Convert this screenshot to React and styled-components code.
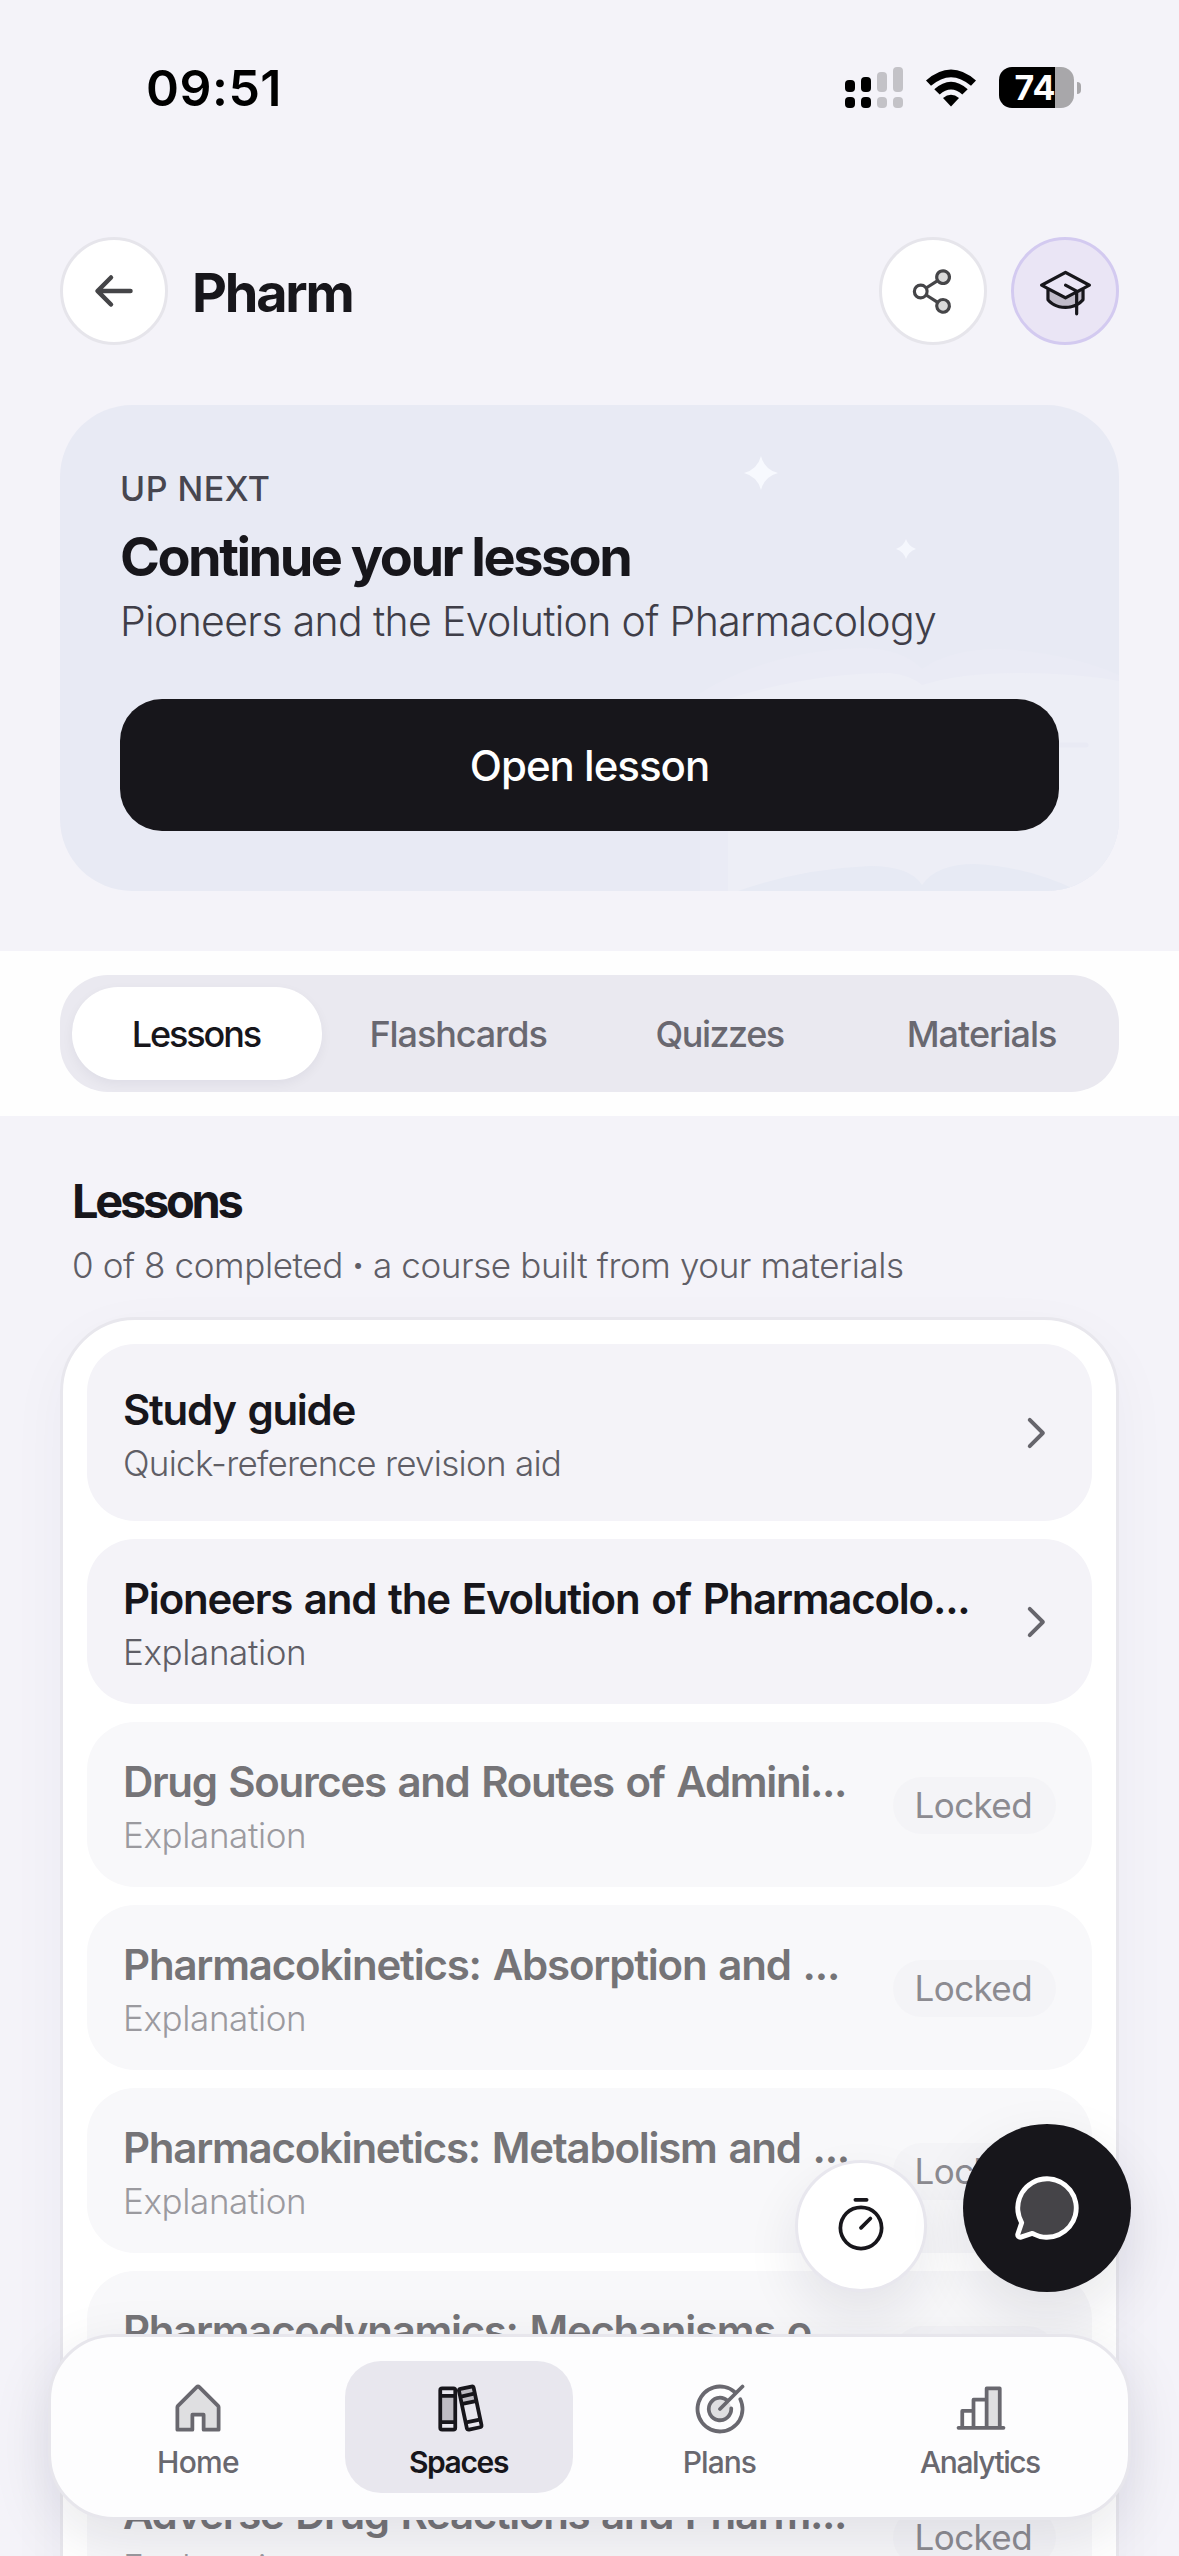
import { useState } from 'react';
import styled, { createGlobalStyle } from 'styled-components';
import {
  PiArrowLeftBold,
  PiBooksDuotone,
  PiCaretRightBold,
  PiChartBarDuotone,
  PiChatCircleDuotone,
  PiGraduationCapDuotone,
  PiHouseDuotone,
  PiShareNetworkDuotone,
  PiTargetDuotone,
  PiTimer,
} from 'react-icons/pi';

const tabs = [
  { label: 'Lessons', tracking: -2.1 },
  { label: 'Flashcards', tracking: -1.1 },
  { label: 'Quizzes', tracking: -1.5 },
  { label: 'Materials', tracking: -1 },
];

const lessons = [
  { title: 'Study guide', note: 'Quick-reference revision aid', tracking: -1.3, noteTracking: -0.75, tall: true },
  { title: 'Pioneers and the Evolution of Pharmacolo...', note: 'Explanation', tracking: -1.22 },
  { title: 'Drug Sources and Routes of Admini...', note: 'Explanation', tracking: -1.34, locked: true },
  { title: 'Pharmacokinetics: Absorption and ...', note: 'Explanation', tracking: -1.2, locked: true },
  { title: 'Pharmacokinetics: Metabolism and ...', note: 'Explanation', tracking: -1.25, locked: true },
  { title: 'Pharmacodynamics: Mechanisms o...', note: 'Explanation', tracking: -1.3, locked: true },
  { title: 'Adverse Drug Reactions and Pharm...', note: 'Explanation', tracking: -1.34, locked: true },
];

const navItems = [
  { label: 'Home', icon: PiHouseDuotone, tracking: -0.7 },
  { label: 'Spaces', icon: PiBooksDuotone, tracking: -1.39 },
  { label: 'Plans', icon: PiTargetDuotone, tracking: -0.97 },
  { label: 'Analytics', icon: PiChartBarDuotone, tracking: -1.5 },
];

function SignalIcon() {
  return (
    <svg width="58" height="41" viewBox="0 0 58 41">
      <g fill="#000">
        <rect x="0" y="13" width="10" height="12" rx="4" />
        <rect x="16" y="10" width="10" height="15" rx="4" />
        <rect x="0" y="30" width="10" height="11" rx="4" />
        <rect x="16" y="30" width="10" height="11" rx="4" />
      </g>
      <g fill="#c3c2c7">
        <rect x="32" y="5" width="10" height="20" rx="4" />
        <rect x="48" y="0" width="10" height="25" rx="4" />
        <rect x="32" y="30" width="10" height="11" rx="4" />
        <rect x="48" y="30" width="10" height="11" rx="4" />
      </g>
    </svg>
  );
}

function WifiIcon() {
  return (
    <svg width="52" height="38" viewBox="0 0 52 38">
      <path d="M1 11.5 Q26 -10.5 51 11.5 L46 16.8 Q26 -0.5 6 16.8 Z" fill="#000" />
      <path d="M9.3 20.2 Q26 5.2 42.7 20.2 L37.3 25.6 Q26 15.4 14.7 25.6 Z" fill="#000" />
      <path d="M18 29 Q26 22.6 34 29 L26 37.4 Z" fill="#000" />
    </svg>
  );
}

// Open book and sparkles behind the card content
function BookArt() {
  return (
    <Art viewBox="0 0 1059 486">
      <path d="M701 51 Q704.500 64.500 718 68 Q704.500 71.500 701 85 Q697.500 71.500 684 68 Q697.500 64.500 701 51 Z" fill="#f7f9fe" />
      <path d="M846 134 Q848.500 141.500 856 144 Q848.500 146.500 846 154 Q843.500 146.500 836 144 Q843.500 141.500 846 134 Z" fill="#f5f7fd" />
      <path d="M640 486 V288 Q710 246 800 243 Q842 243 862 264 Q890 244 940 244 Q1010 248 1059 270 V486 Z" fill="#eaebf5" />
      <path d="M668 486 V294 Q750 268 830 268 Q850 270 862 280 Q900 268 960 268 Q1015 268 1059 276 V486 Z" fill="#edeef6" />
      <path d="M678 486 Q740 464 810 461 Q850 461 862 480 Q876 459 915 459 Q970 462 1018 486 Z" fill="#e7eaf4" />
      <path d="M1000 340 H1026" stroke="#e9eaf4" strokeWidth="5" strokeLinecap="round" />
    </Art>
  );
}

export default function App() {
  const [activeTab, setActiveTab] = useState('Lessons');
  const [activeNav, setActiveNav] = useState('Spaces');

  return (
    <Screen>
      <GlobalStyle />
      <StatusBar>
        <Clock>09:51</Clock>
        <StatusIcons>
          <SignalIcon />
          <WifiIcon />
          <Battery>
            <BatteryBody>74</BatteryBody>
            <BatteryTip />
          </Battery>
        </StatusIcons>
      </StatusBar>

      <Header>
        <RoundButton aria-label="Back">
          <PiArrowLeftBold size={48} />
        </RoundButton>
        <PageTitle>Pharm</PageTitle>
        <RoundButton aria-label="Share">
          <PiShareNetworkDuotone size={51} />
        </RoundButton>
        <RoundButton aria-label="Study" $accent>
          <PiGraduationCapDuotone size={51} />
        </RoundButton>
      </Header>

      <NextCard>
        <BookArt />
        <NextContent>
          <Eyebrow>UP NEXT</Eyebrow>
          <NextTitle>Continue your lesson</NextTitle>
          <NextText>Pioneers and the Evolution of Pharmacology</NextText>
          <OpenButton>Open lesson</OpenButton>
        </NextContent>
      </NextCard>

      <TabStrip>
        <TabList>
          {tabs.map((tab) => (
            <Tab
              key={tab.label}
              $active={tab.label === activeTab}
              $tracking={tab.tracking}
              onClick={() => setActiveTab(tab.label)}
            >
              {tab.label}
            </Tab>
          ))}
        </TabList>
      </TabStrip>

      <SectionHead>
        <SectionTitle>Lessons</SectionTitle>
        <SectionText>0 of 8 completed <Dot>·</Dot> a course built from your materials</SectionText>
      </SectionHead>

      <LessonList>
        {lessons.map((lesson) => (
          <LessonRow key={lesson.title} $tall={lesson.tall} $locked={lesson.locked}>
            <LessonText>
              <LessonTitle $locked={lesson.locked} $tracking={lesson.tracking}>{lesson.title}</LessonTitle>
              <LessonNote $locked={lesson.locked} $tracking={lesson.noteTracking}>{lesson.note}</LessonNote>
            </LessonText>
            {lesson.locked ? <LockedPill>Locked</LockedPill> : <PiCaretRightBold size={42} />}
          </LessonRow>
        ))}
      </LessonList>

      <FloatingActions>
        <TimerButton aria-label="Timer">
          <PiTimer size={60} />
        </TimerButton>
        <ChatButton aria-label="Chat">
          <PiChatCircleDuotone size={78} />
        </ChatButton>
      </FloatingActions>

      <BottomNav>
        {navItems.map(({ label, icon: Icon, tracking }) => (
          <NavItem key={label} $active={label === activeNav} onClick={() => setActiveNav(label)}>
            <Icon size={60} />
            <NavLabel $active={label === activeNav} $tracking={tracking}>{label}</NavLabel>
          </NavItem>
        ))}
      </BottomNav>
    </Screen>
  );
}

const GlobalStyle = createGlobalStyle`
  * {
    box-sizing: border-box;
  }
  body {
    margin: 0;
    background: #f4f3f9;
    font-family: Inter, "Liberation Sans", sans-serif;
    color: #17161b;
  }
  button {
    font-family: inherit;
    border: none;
    padding: 0;
    margin: 0;
    cursor: pointer;
  }
  svg {
    display: block;
    flex-shrink: 0;
  }
`;

const Screen = styled.div`
  position: relative;
  width: 1179px;
  height: 2556px;
  overflow: hidden;
  background: #f4f3f9;
`;

const StatusBar = styled.div`
  height: 237px;
  padding: 67px 98px 0 146px;
  display: flex;
  justify-content: space-between;
  align-items: flex-start;
  color: #000;
`;

const Clock = styled.div`
  font-size: 50px;
  font-weight: 600;
  line-height: 43px;
  letter-spacing: 0.5px;
`;

const StatusIcons = styled.div`
  display: flex;
  align-items: center;
  gap: 22px;
`;

const Battery = styled.div`
  display: flex;
  align-items: center;
  gap: 3px;
`;

const BatteryBody = styled.div`
  width: 75px;
  height: 41px;
  padding-right: 3px;
  border-radius: 13px;
  background: linear-gradient(90deg, #000 56px, #a8a7aa 56px);
  color: #fff;
  font-size: 34px;
  font-weight: 700;
  line-height: 41px;
  text-align: center;
`;

const BatteryTip = styled.div`
  width: 4px;
  height: 12px;
  border-radius: 0 4px 4px 0;
  background: #a8a7aa;
`;

const Header = styled.header`
  display: flex;
  align-items: center;
  gap: 24px;
  padding: 0 60px;
`;

const RoundButton = styled.button`
  width: 108px;
  height: 108px;
  flex-shrink: 0;
  border-radius: 50%;
  display: flex;
  align-items: center;
  justify-content: center;
  border: 3px solid ${(props) => (props.$accent ? '#d3caf0' : '#e6e5eb')};
  background: ${(props) => (props.$accent ? '#eae5f5' : '#fff')};
  color: ${(props) => (props.$accent ? '#17161b' : '#454548')};
`;

const PageTitle = styled.h1`
  flex: 1;
  margin: 0;
  padding-top: 3px;
  font-size: 54px;
  font-weight: 700;
  line-height: 64px;
  letter-spacing: -2.2px;
`;

const NextCard = styled.section`
  position: relative;
  margin: 60px 60px 0;
  height: 486px;
  border-radius: 72px;
  overflow: hidden;
  background: #e8eaf4;
`;

const Art = styled.svg`
  position: absolute;
  top: 0;
  left: 0;
  width: 1059px;
  height: 486px;
`;

const NextContent = styled.div`
  position: relative;
  display: flex;
  flex-direction: column;
  padding: 60px;
`;

const Eyebrow = styled.div`
  font-size: 34px;
  font-weight: 500;
  line-height: 48px;
  letter-spacing: 0.5px;
  color: #47464f;
`;

const NextTitle = styled.h2`
  margin: 12px 0 0;
  font-size: 54px;
  font-weight: 700;
  line-height: 64px;
  letter-spacing: -2.5px;
`;

const NextText = styled.div`
  margin-top: 3px;
  font-size: 41px;
  font-weight: 300;
  line-height: 58px;
  letter-spacing: -0.66px;
  color: #3f3e48;
`;

const OpenButton = styled.button`
  height: 132px;
  margin-top: 49px;
  border-radius: 42px;
  background: #17161b;
  color: #fff;
  font-size: 42px;
  font-weight: 500;
  letter-spacing: -1px;
`;

const TabStrip = styled.div`
  margin-top: 60px;
  padding: 24px 60px;
  background: #fefefe;
`;

const TabList = styled.div`
  height: 117px;
  padding: 12px;
  display: grid;
  grid-template-columns: repeat(4, 1fr);
  gap: 12px;
  border-radius: 48px;
  background: #eae9f0;
`;

const Tab = styled.button`
  border-radius: 46px;
  font-size: 36px;
  font-weight: 500;
  letter-spacing: ${(props) => props.$tracking}px;
  text-indent: ${(props) => props.$tracking}px;
  color: ${(props) => (props.$active ? '#17161b' : '#696870')};
  background: ${(props) => (props.$active ? '#fff' : 'transparent')};
  box-shadow: ${(props) => (props.$active ? '0 4px 12px rgba(23, 22, 60, 0.05)' : 'none')};
`;

const SectionHead = styled.div`
  padding: 55px 72px 25px;
`;

const SectionTitle = styled.h2`
  margin: 0;
  font-size: 47px;
  font-weight: 700;
  line-height: 60px;
  letter-spacing: -3.3px;
`;

const SectionText = styled.div`
  margin-top: 7px;
  font-size: 35px;
  font-weight: 300;
  line-height: 54px;
  letter-spacing: -0.4px;
  color: #5f5e66;
`;

const Dot = styled.span`
  font-weight: 700;
`;

const LessonList = styled.div`
  margin: 0 60px;
  padding: 24px;
  display: flex;
  flex-direction: column;
  gap: 18px;
  border: 3px solid #e8e7ed;
  border-radius: 75px;
  background: #fff;
  box-shadow: 0 18px 60px rgba(30, 25, 80, 0.04);
`;

const LessonRow = styled.div`
  height: ${(props) => (props.$tall ? 177 : 165)}px;
  flex-shrink: 0;
  padding: 0 36px;
  display: flex;
  align-items: center;
  gap: 24px;
  border-radius: 48px;
  color: #66656c;
  background: ${(props) => (props.$locked ? '#f8f8fa' : '#f4f3f8')};
`;

const LessonText = styled.div`
  flex: 1;
  min-width: 0;
  padding-top: 3px;
`;

const LessonTitle = styled.div`
  font-size: 42px;
  font-weight: 600;
  line-height: 54px;
  white-space: nowrap;
  word-spacing: 2.5px;
  letter-spacing: ${(props) => props.$tracking}px;
  color: ${(props) => (props.$locked ? '#757477' : '#17161b')};
`;

const LessonNote = styled.div`
  margin-top: 4px;
  font-size: 35px;
  font-weight: 300;
  line-height: 45px;
  letter-spacing: ${(props) => props.$tracking ?? -0.4}px;
  color: ${(props) => (props.$locked ? '#9b9a9f' : '#5f5e66')};
`;

const LockedPill = styled.div`
  height: 57px;
  margin-top: 2px;
  padding: 0 24px 0 22px;
  border-radius: 29px;
  background: #f4f4f7;
  color: #8c8b91;
  font-size: 35px;
  font-weight: 400;
  line-height: 57px;
  letter-spacing: -0.6px;
`;

const FloatingActions = styled.div`
  position: absolute;
  right: 48px;
  bottom: 264px;
  display: flex;
  align-items: flex-end;
  gap: 36px;
`;

const TimerButton = styled.button`
  width: 132px;
  height: 132px;
  border-radius: 50%;
  display: flex;
  align-items: center;
  justify-content: center;
  border: 3px solid #e8e7ee;
  background: #fff;
  color: #17161b;
  box-shadow: 0 24px 54px rgba(23, 22, 50, 0.09);
`;

const ChatButton = styled.button`
  width: 168px;
  height: 168px;
  border-radius: 50%;
  display: flex;
  align-items: center;
  justify-content: center;
  background: #17161b;
  color: #fff;
  box-shadow: 0 24px 60px rgba(23, 22, 50, 0.1);
`;

const BottomNav = styled.nav`
  position: absolute;
  left: 48px;
  right: 48px;
  bottom: 36px;
  height: 186px;
  padding: 0 17px;
  display: flex;
  align-items: center;
  justify-content: space-around;
  border: 3px solid #e7e6ec;
  border-radius: 66px;
  background: #fdfdfe;
  box-shadow: 0 18px 60px rgba(23, 22, 50, 0.1);
`;

const NavItem = styled.button`
  width: 228px;
  height: 132px;
  padding-top: 4px;
  display: flex;
  flex-direction: column;
  align-items: center;
  justify-content: center;
  gap: 5px;
  border-radius: 36px;
  color: ${(props) => (props.$active ? '#17161b' : '#69686f')};
  background: ${(props) => (props.$active ? '#e8e7ee' : 'transparent')};
`;

const NavLabel = styled.span`
  font-size: 30px;
  font-weight: ${(props) => (props.$active ? 600 : 500)};
  line-height: 36px;
  letter-spacing: ${(props) => props.$tracking}px;
  text-indent: ${(props) => props.$tracking}px;
`;
